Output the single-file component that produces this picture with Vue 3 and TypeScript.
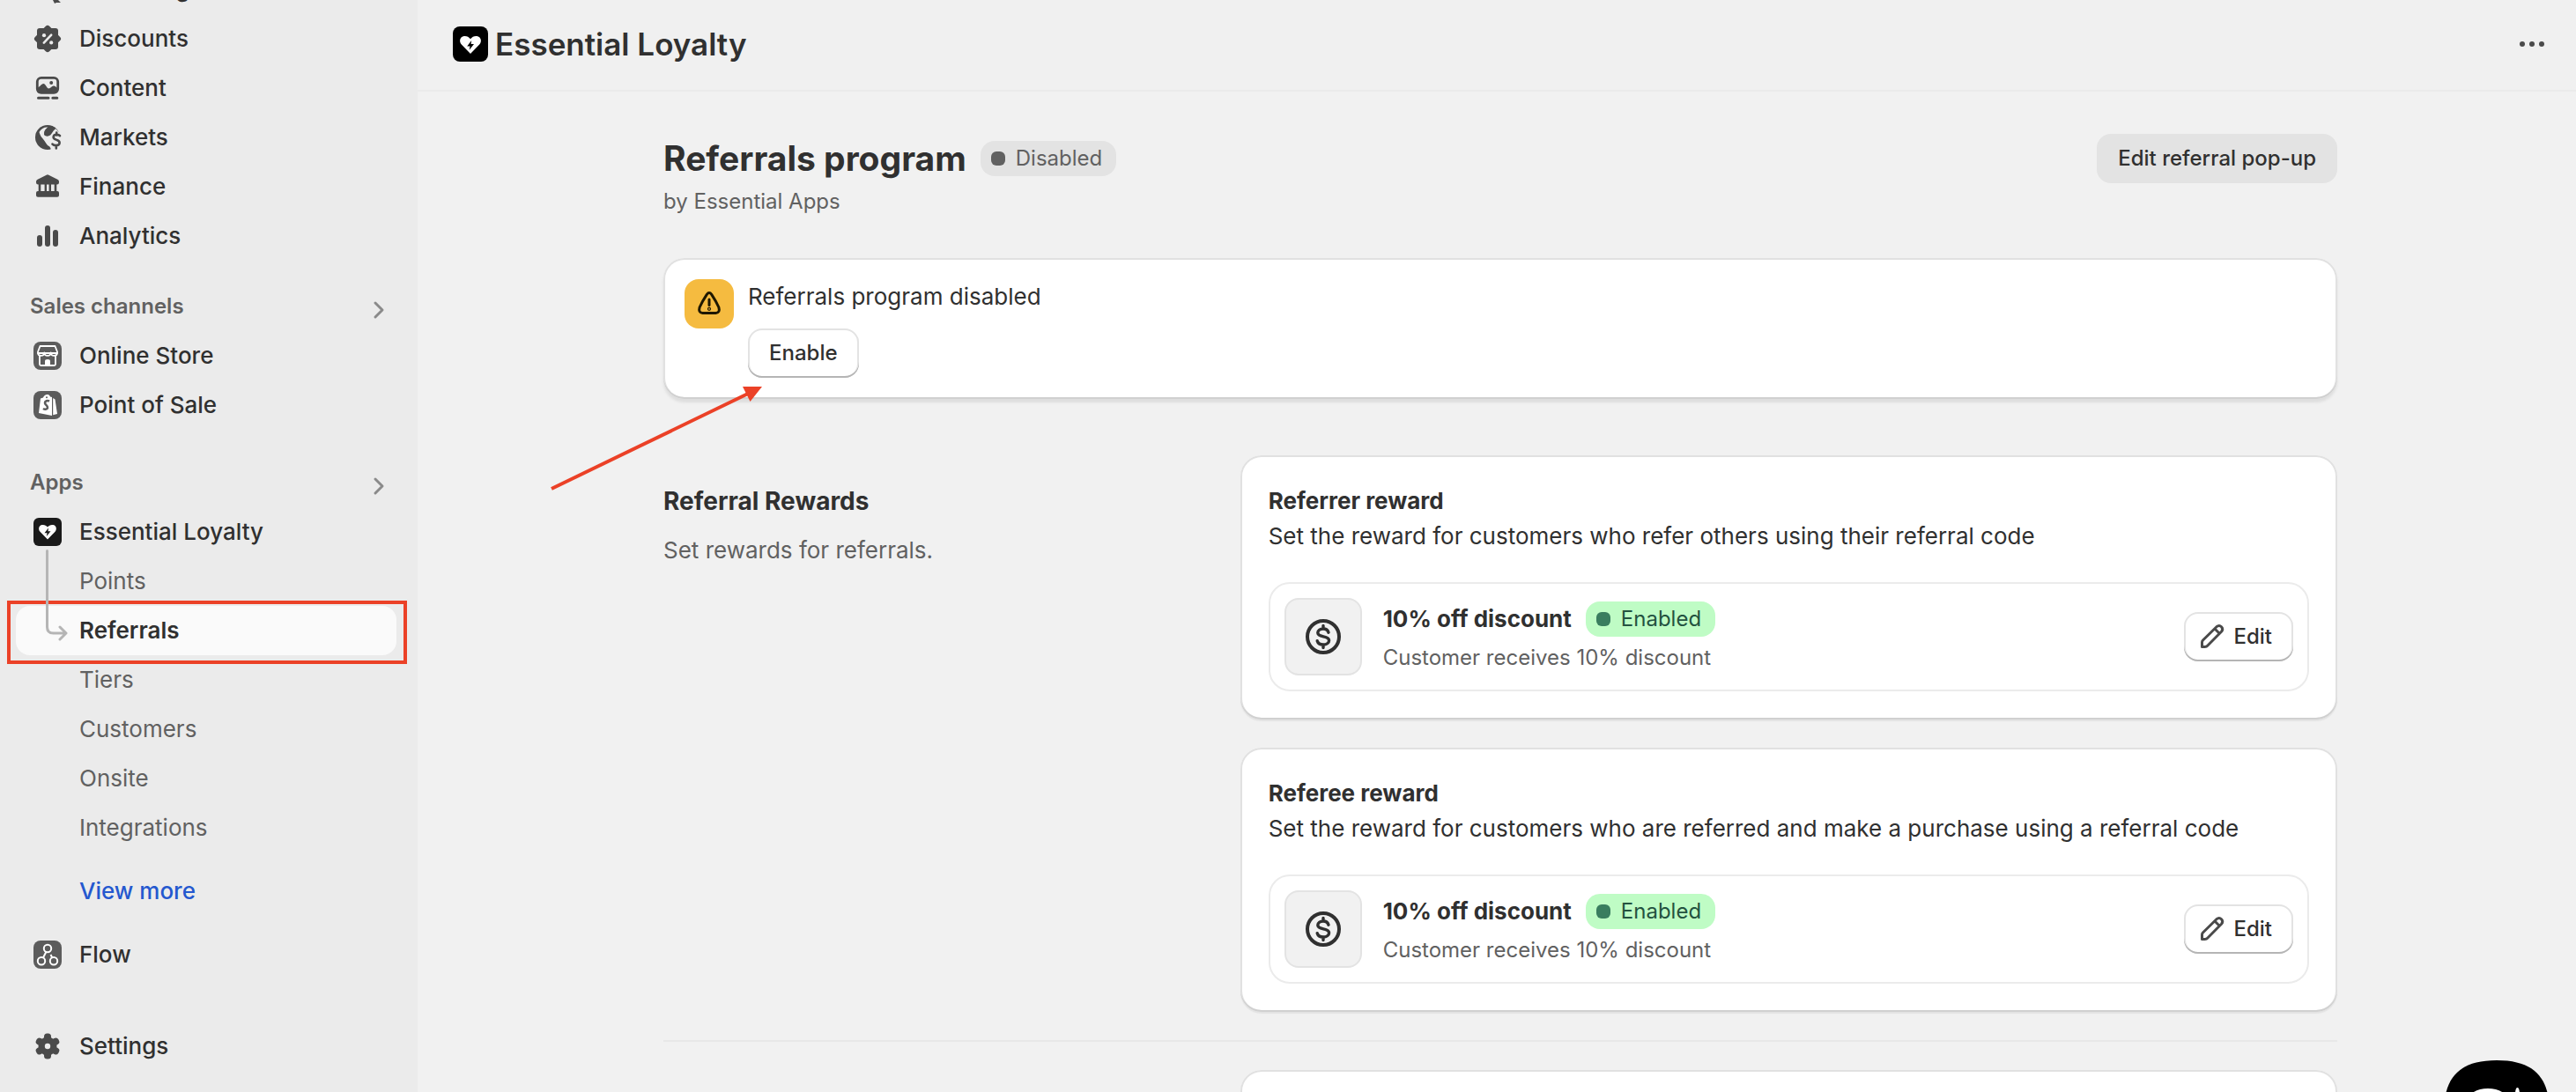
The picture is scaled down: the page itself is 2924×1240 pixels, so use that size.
<script setup lang="ts">
type NavItem = { label: string; icon: string }

const mainNav: NavItem[] = [
  { label: 'Marketing', icon: 'marketing' },
  { label: 'Discounts', icon: 'discounts' },
  { label: 'Content', icon: 'content' },
  { label: 'Markets', icon: 'markets' },
  { label: 'Finance', icon: 'finance' },
  { label: 'Analytics', icon: 'analytics' },
]
const channels: NavItem[] = [
  { label: 'Online Store', icon: 'store' },
  { label: 'Point of Sale', icon: 'pos' },
]
const appPages = ['Points', 'Referrals', 'Tiers', 'Customers', 'Onsite', 'Integrations']
const activePage = 'Referrals'

const rewards = [
  {
    title: 'Referrer reward',
    text: 'Set the reward for customers who refer others using their referral code',
    name: '10% off discount',
    detail: 'Customer receives 10% discount',
  },
  {
    title: 'Referee reward',
    text: 'Set the reward for customers who are referred and make a purchase using a referral code',
    name: '10% off discount',
    detail: 'Customer receives 10% discount',
  },
]
</script>

<template>
  <div class="shell">
    <nav class="sidebar" aria-label="Admin">
      <ul class="list list-main">
        <li v-for="item in mainNav" :key="item.label">
          <a href="#" class="row">
            <svg class="icon" viewBox="0 0 40 40" aria-hidden="true">
              <g v-if="item.icon === 'marketing'" fill="#4a4a4a">
                <circle cx="18" cy="19" r="13" />
                <path d="M27 24l2 5 5-2-2 5 3 3-5 0-2 1-2-4z" />
              </g>
              <g v-else-if="item.icon === 'discounts'">
                <rect x="8" y="8" width="24" height="24" rx="3" fill="#4a4a4a" />
                <rect x="8.5" y="8.5" width="23" height="23" rx="3" fill="#4a4a4a" transform="rotate(45 20 20)" />
                <circle cx="16" cy="16.2" r="2.1" fill="#ebebeb" />
                <circle cx="24.2" cy="24.4" r="2.1" fill="#ebebeb" />
                <path d="M15.8 24.6L24.2 15.6" stroke="#ebebeb" stroke-width="2.6" stroke-linecap="round" />
              </g>
              <g v-else-if="item.icon === 'content'" fill="#4a4a4a">
                <rect x="8.3" y="8.3" width="23.4" height="17" rx="4.5" fill="none" stroke="#4a4a4a" stroke-width="2.8" />
                <path d="M8 20c3-1 5-5 7.300-5s4 5.500 6 5.500 3.500-3 5.500-3 3 2 5 2.500v2q0 4-4 4h-16q-4 0-4-4z" />
                <circle cx="24.200" cy="14" r="2" />
                <path d="M9.500 31.300h11.500M25.800 31.300h5" stroke="#4a4a4a" stroke-width="3" stroke-linecap="round" />
              </g>
              <g v-else-if="item.icon === 'markets'">
                <circle cx="20" cy="20" r="14" fill="#4a4a4a" />
                <path d="M10.500 14c2-4 6-6 10-5.500-3 2-5 5-4 7.500 1.500 3 6 1 8-1.500 2-3 3-4.500 4.500-4.500l6 6-1 20h-11c2-4-1-6-3-7-2-2-3-5-5-7-1.500-2-3-3-4.500-8z" fill="#ebebeb" />
                <path d="M16 17c0-5 4-9 9-10l4 3.500c-2 1-3 3-5 6-2 2.500-6 3-8 .5z" fill="#4a4a4a" />
                <path d="M34 18.200c-1.500-1.800-6.500-2-7.300.8-.7 3 2.500 3.300 4 4 1.500.6 3.500 1.500 2.800 4-1 3-6.500 2.500-8 .6M30.200 14.500v3M29.800 29.500v3" fill="none" stroke="#4a4a4a" stroke-width="2.600" stroke-linecap="round" />
              </g>
              <g v-else-if="item.icon === 'finance'" fill="#4a4a4a">
                <path d="M18.700 6.700q1.300-.8 2.600 0l10 5q1.700.9 1.700 2.500v1q0 2.300-2.300 2.300H9.300Q7 17.500 7 15.200v-1q0-1.600 1.700-2.500z" />
                <path d="M9.700 17h2.600v9H9.700zM16.600 17h2.400v9h-2.400zM21.600 17H24v9h-2.400zM27.700 17h2.600v9h-2.600z" />
                <rect x="7" y="25" width="26" height="6.700" rx="2" />
              </g>
              <g v-else fill="#4a4a4a">
                <rect x="8" y="19" width="6" height="13" rx="3" />
                <rect x="17" y="8" width="6" height="24" rx="3" />
                <rect x="26" y="13" width="6" height="19" rx="3" />
              </g>
            </svg>
            <span>{{ item.label }}</span>
          </a>
        </li>
      </ul>

      <button type="button" class="group-head">
        <span>Sales channels</span>
        <svg class="chevron" viewBox="0 0 16 24" aria-hidden="true"><path d="M4 4l8 8-8 8" /></svg>
      </button>
      <ul class="list">
        <li v-for="item in channels" :key="item.label">
          <a href="#" class="row">
            <svg class="icon" viewBox="0 0 40 40" aria-hidden="true">
              <rect x="4" y="4" width="32" height="32" rx="8" fill="#5c5c5c" />
              <g v-if="item.icon === 'store'" fill="none" stroke="#fff" stroke-width="1.800" stroke-linejoin="round">
                <path d="M11.500 9h17l2.500 6.500v1.500H9v-1.500z" />
                <path d="M9 16.500c0 4.500 7 4.500 7.300 0 .3 4.500 7.100 4.500 7.400 0 .3 4.500 7.300 4.500 7.300 0" />
                <path d="M11 20v9.500q0 1.500 1.500 1.500h15q1.500 0 1.500-1.500V20" />
                <path d="M17 31v-5q0-2 3-2t3 2v5" fill="#fff" stroke="none" />
              </g>
              <g v-else fill="#fff">
                <path d="M12 12.500l3-1c1-2.500 3-4 5.500-3.500 1.500.3 2 1.500 2.500 2.500l2 .5v21l-15-3z" />
                <path d="M26.200 12l2.300 1.500 2.500 16.500-4.800 1.300z" />
                <path d="M22 15.500c-2-1-5-.5-5 2s3.500 3 3 5.500-3.500 2-5 1" fill="none" stroke="#5c5c5c" stroke-width="2.600" />
                <circle cx="19" cy="11.200" r="1" fill="#5c5c5c" />
              </g>
            </svg>
            <span>{{ item.label }}</span>
          </a>
        </li>
      </ul>

      <button type="button" class="group-head group-apps">
        <span>Apps</span>
        <svg class="chevron" viewBox="0 0 16 24" aria-hidden="true"><path d="M4 4l8 8-8 8" /></svg>
      </button>
      <a href="#" class="row">
        <svg class="icon" viewBox="0 0 40 40" aria-hidden="true">
          <rect x="4" y="4" width="32" height="32" rx="6" fill="#1a1a1a" />
          <path d="M20 28.500l-8.500-8.700c-2.400-2.600-1.600-7.300 2.500-7.800 2.500-.3 4.500.8 6 2.600 1.500-1.800 3.500-2.900 6-2.600 4.100.5 4.900 5.200 2.500 7.800z" fill="#fff" />
          <path d="M21 15.500l-4.500 5.700h3l-.7 3.800 4.700-5.800h-3z" fill="#1a1a1a" />
        </svg>
        <span>Essential Loyalty</span>
      </a>
      <div class="sub">
        <ul class="list">
          <li v-for="page in appPages" :key="page" :class="{ marked: page === activePage }">
            <a href="#" class="sub-row" :class="{ active: page === activePage }">{{ page }}</a>
          </li>
        </ul>
        <svg class="branch" viewBox="0 0 26 104" aria-hidden="true">
          <path d="M2.500 1.500v86.500q0 7 7 7h13M17 88l7 7-7 7" />
        </svg>
      </div>
      <a href="#" class="sub-row more">View more</a>
      <a href="#" class="row flow">
        <svg class="icon" viewBox="0 0 40 40" aria-hidden="true">
          <rect x="4" y="4" width="32" height="32" rx="8" fill="#5c5c5c" />
          <g fill="none" stroke="#fff" stroke-width="2">
            <circle cx="20" cy="13" r="4.200" />
            <circle cx="13" cy="27.300" r="4.200" />
            <circle cx="27" cy="27.300" r="4.200" />
            <path d="M18.300 17l-3.300 6.500M23.500 20l1.800 3.500" />
          </g>
        </svg>
        <span>Flow</span>
      </a>
      <a href="#" class="row settings">
        <svg class="icon" viewBox="0 0 40 40" aria-hidden="true">
          <g fill="#4a4a4a">
            <circle cx="20" cy="20" r="10.500" />
            <rect v-for="angle in [0, 60, 120]" :key="angle" x="16" y="5.500" width="8" height="29" rx="3.500" :transform="`rotate(${angle} 20 20)`" />
          </g>
          <circle cx="20" cy="20" r="3.200" fill="#ebebeb" />
        </svg>
        <span>Settings</span>
      </a>
    </nav>

    <div class="main">
      <header class="topbar">
        <svg class="logo" viewBox="0 0 40 40" aria-hidden="true">
          <rect width="40" height="40" rx="8" fill="#000" />
          <path d="M20 31L9.800 20.500c-3-3.200-2-8.900 3-9.500 3-.3 5.400 1 7.200 3.200 1.800-2.200 4.200-3.500 7.200-3.200 5 .6 6 6.300 3 9.500z" fill="#fff" />
          <path d="M21.200 16l-5 6.500h3.300l-.8 4.200 5.300-6.700h-3.400z" fill="#000" />
        </svg>
        <h1 class="app-name">Essential Loyalty</h1>
        <button type="button" class="dots" aria-label="More actions">
          <svg viewBox="0 0 40 40" fill="#4a4a4a" aria-hidden="true">
            <circle cx="9" cy="20" r="3" /><circle cx="20" cy="20" r="3" /><circle cx="31" cy="20" r="3" />
          </svg>
        </button>
      </header>

      <main class="page">
        <div class="page-head">
          <div>
            <div class="title-line">
              <h2 class="page-title">Referrals program</h2>
              <span class="badge"><i class="pip"></i>Disabled</span>
            </div>
            <p class="byline">by Essential Apps</p>
          </div>
          <button type="button" class="btn btn-plain">Edit referral pop-up</button>
        </div>

        <section class="card banner">
          <span class="warn">
            <svg viewBox="0 0 40 40" aria-hidden="true">
              <path d="M17.300 9.300q2.700-3.600 5.400 0 5.300 8 8.200 14.700 1.700 6-3.400 6.500h-15q-5.100-.5-3.400-6.500 2.900-6.700 8.200-14.700z" />
              <path d="M20 15v6.500" /><circle cx="20" cy="25.800" r=".6" />
            </svg>
          </span>
          <div>
            <p class="banner-text">Referrals program disabled</p>
            <button type="button" class="btn btn-raised">Enable</button>
          </div>
          <svg class="pointer" viewBox="0 0 244 120" aria-hidden="true">
            <path d="M3 117L226 9" stroke="#eb4127" stroke-width="4" />
            <path d="M242 1h-22l8.500 17z" fill="#eb4127" />
          </svg>
        </section>

        <section class="annotated">
          <div class="note">
            <h3 class="note-title">Referral Rewards</h3>
            <p class="note-text">Set rewards for referrals.</p>
          </div>
          <div class="cards">
            <article v-for="reward in rewards" :key="reward.title" class="card reward">
              <h4 class="card-title">{{ reward.title }}</h4>
              <p class="card-text">{{ reward.text }}</p>
              <div class="item">
                <span class="thumb">
                  <svg viewBox="0 0 48 48" aria-hidden="true">
                    <circle cx="24" cy="24" r="18" stroke-width="4" />
                    <path d="M30 19.200c-.8-2.700-3-4.200-6-4.200-3.700 0-6.200 1.800-6.200 4.600 0 5.800 12.800 2.800 12.800 8.600 0 3-2.900 4.800-6.600 4.800-3.400 0-6-1.500-6.800-4.300M24 11.500v3.500M24 33v3.500" stroke-width="3.400" />
                  </svg>
                </span>
                <div class="item-body">
                  <div class="item-line">
                    <strong class="item-name">{{ reward.name }}</strong>
                    <span class="badge badge-on"><i class="pip"></i>Enabled</span>
                  </div>
                  <p class="item-detail">{{ reward.detail }}</p>
                </div>
                <button type="button" class="btn btn-raised btn-edit">
                  <svg viewBox="0 0 40 40" aria-hidden="true">
                    <path d="M8.500 31.500v-5q0-1.500 1-2.500L25 8.700q3-2.500 5.500 0 2.500 2.700 0 5.600L15.200 29.800q-1.500 1.700-3.500 1.700zM23 11l6 6" />
                  </svg>
                  <span>Edit</span>
                </button>
              </div>
            </article>
          </div>
        </section>

        <hr class="rule" />

        <section class="annotated next">
          <div class="note"></div>
          <div class="card upcoming"></div>
        </section>
      </main>
    </div>

    <button type="button" class="chat" aria-label="Open chat">
      <svg viewBox="0 0 120 120" aria-hidden="true">
        <path d="M60 0C105 0 120 22 120 60S105 120 60 120 0 98 0 60 15 0 60 0z" fill="#000" />
        <path d="M50 32c-16 0-26 9-26 22s10 22 26 22 26-9 26-22-10-22-26-22z" fill="#fff" />
        <path d="M83.500 31q2 0 2.500 6 .6 4 4 5-3.500 1-4 5-.5 6-2.500 6t-2.500-6q-.5-4-4-5 3.400-1 4-5 .5-6 2.500-6z" fill="#fff" />
      </svg>
    </button>
  </div>
</template>

<style>
body {
  margin: 0;
  background: #f1f1f1;
}
</style>

<style scoped>
.shell {
  position: relative;
  display: flex;
  height: 100vh;
  overflow: hidden;
  background: #f1f1f1;
  color: #303030;
  font-family: Inter, "Liberation Sans", sans-serif;
  font-size: 26px;
  font-weight: 400;
  line-height: 40px;
}
h1, h2, h3, h4, p, ul {
  margin: 0;
  padding: 0;
}
a {
  color: inherit;
  text-decoration: none;
}
button {
  margin: 0;
  padding: 0;
  border: 0;
  background: none;
  color: inherit;
  font: inherit;
}
svg {
  display: block;
}

/* Sidebar */
.sidebar {
  flex: none;
  width: 474px;
  box-sizing: border-box;
  padding: 0 24px 0 18px;
  background: #ebebeb;
  font-weight: 500;
}
.list {
  list-style: none;
}
.list-main {
  margin-top: -40px;
}
.row {
  display: flex;
  align-items: center;
  gap: 16px;
  height: 56px;
  padding-left: 16px;
}
.icon {
  flex: none;
  width: 40px;
  height: 40px;
}
.group-head {
  display: flex;
  align-items: center;
  justify-content: space-between;
  width: 100%;
  height: 56px;
  margin-top: 24px;
  padding: 0 12px 0 16px;
  color: #616161;
  font-size: 24px;
  font-weight: 600;
}
.group-apps {
  margin-top: 32px;
}
.chevron {
  width: 16px;
  height: 24px;
  margin-top: 8px;
  fill: none;
  stroke: #8a8a8a;
  stroke-width: 3;
  stroke-linecap: round;
  stroke-linejoin: round;
}
.sub {
  position: relative;
}
.sub-row {
  display: block;
  height: 56px;
  padding-left: 72px;
  border-radius: 16px;
  color: #616161;
  font-weight: 400;
  line-height: 56px;
}
.sub-row.active {
  background: #fafafa;
  color: #303030;
  font-weight: 600;
}
.marked {
  position: relative;
}
.marked::after {
  content: "";
  position: absolute;
  inset: -6px -12px -10px -10px;
  border: 4px solid #eb4127;
  pointer-events: none;
}
.branch {
  position: absolute;
  top: -8px;
  left: 33px;
  width: 26px;
  height: 104px;
  fill: none;
  stroke: #b5b5b5;
  stroke-width: 3;
  stroke-linecap: round;
  stroke-linejoin: round;
}
.sub-row.more {
  margin-top: 16px;
  color: #2458cf;
  font-weight: 500;
}
.flow {
  margin-top: 16px;
}
.settings {
  margin-top: 48px;
}

/* Top bar */
.main {
  flex: 1;
  min-width: 0;
}
.topbar {
  display: flex;
  align-items: center;
  gap: 8px;
  height: 100px;
  padding: 0 30px 2px 40px;
  border-bottom: 2px solid #ebebeb;
  background: #f0f0f0;
}
.logo {
  width: 40px;
  height: 40px;
}
.app-name {
  font-size: 35px;
  font-weight: 600;
}
.dots {
  width: 40px;
  height: 40px;
  margin-left: auto;
}

/* Page */
.page {
  max-width: 1900px;
  margin: 0 auto;
  padding: 48px 0 0 8px;
}
.page-head {
  display: flex;
  align-items: flex-start;
  justify-content: space-between;
}
.title-line {
  display: flex;
  align-items: center;
  gap: 16px;
  height: 56px;
}
.page-title {
  font-size: 39px;
  font-weight: 700;
}
.byline {
  margin-top: 1px;
  color: #616161;
  font-size: 24px;
}
.badge {
  display: flex;
  align-items: center;
  gap: 12px;
  height: 40px;
  padding: 0 16px 0 12px;
  border-radius: 16px;
  background: #e3e3e3;
  color: #616161;
  font-size: 24px;
}
.pip {
  width: 16px;
  height: 16px;
  border-radius: 6px;
  background: #616161;
}
.badge-on {
  background: #bffcc5;
  color: #245240;
}
.badge-on .pip {
  background: #3a7d5f;
}
.btn {
  height: 56px;
  padding: 0 24px;
  border-radius: 16px;
  font-size: 24px;
  font-weight: 500;
}
.btn-plain {
  background: #e3e3e3;
}
.btn-raised {
  background: #fff;
  box-shadow: inset 0 -2px 0 #b5b5b5, inset 0 0 0 2px #e3e3e3;
}
.card {
  border-radius: 24px;
  background: #fff;
  box-shadow: inset 0 -2px 0 #d0d0d0, inset 0 0 0 2px #e1e1e1, 0 2px 1px #e3e3e3;
}
.banner {
  position: relative;
  display: flex;
  gap: 16px;
  margin-top: 44px;
  padding: 24px;
  box-shadow: inset 0 -2px 0 #d0d0d0, inset 0 0 0 2px #e1e1e1, 0 4px 3px #dedede;
}
.warn {
  display: grid;
  place-items: center;
  width: 56px;
  height: 56px;
  border-radius: 16px;
  background: #f5bb40;
}
.warn svg {
  width: 40px;
  height: 40px;
  fill: none;
  stroke: #1f1800;
  stroke-width: 3;
  stroke-linecap: round;
}
.banner-text {
  margin-bottom: 16px;
}
.pointer {
  position: absolute;
  top: 145px;
  left: -130px;
  width: 244px;
  height: 120px;
}
.annotated {
  display: grid;
  grid-template-columns: 1fr 2fr;
  gap: 32px;
  margin-top: 64px;
}
.note {
  padding-top: 32px;
}
.note-title {
  font-size: 28px;
  font-weight: 700;
}
.note-text {
  margin-top: 16px;
  color: #616161;
}
.cards {
  display: flex;
  flex-direction: column;
  gap: 32px;
}
.reward {
  padding: 32px;
}
.card-title {
  font-size: 26px;
  font-weight: 700;
}
.item {
  display: flex;
  align-items: center;
  margin-top: 32px;
  padding: 16px;
  border: 2px solid #ebebeb;
  border-radius: 24px;
}
.thumb {
  display: grid;
  place-items: center;
  box-sizing: border-box;
  width: 88px;
  height: 88px;
  border: 2px solid #e3e3e3;
  border-radius: 16px;
  background: #f1f1f1;
}
.thumb svg {
  width: 48px;
  height: 48px;
  fill: none;
  stroke: #303030;
  stroke-linecap: round;
}
.item-body {
  flex: 1;
  padding: 4px 0 0 24px;
}
.item-line {
  display: flex;
  align-items: center;
  gap: 16px;
}
.item-name {
  font-weight: 700;
}
.item-detail {
  margin-top: 4px;
  color: #616161;
  font-size: 24px;
}
.btn-edit {
  display: flex;
  align-items: center;
  gap: 4px;
  padding-left: 12px;
}
.btn-edit svg {
  width: 40px;
  height: 40px;
  fill: none;
  stroke: #4a4a4a;
  stroke-width: 3;
  stroke-linejoin: round;
}
.rule {
  margin: 32px 0 0;
  border: 0;
  border-top: 2px solid #e8e8e8;
}
.next {
  margin-top: 32px;
}
.upcoming {
  height: 300px;
}

.chat {
  position: absolute;
  right: 30px;
  bottom: -84px;
  width: 120px;
  height: 120px;
}
</style>
